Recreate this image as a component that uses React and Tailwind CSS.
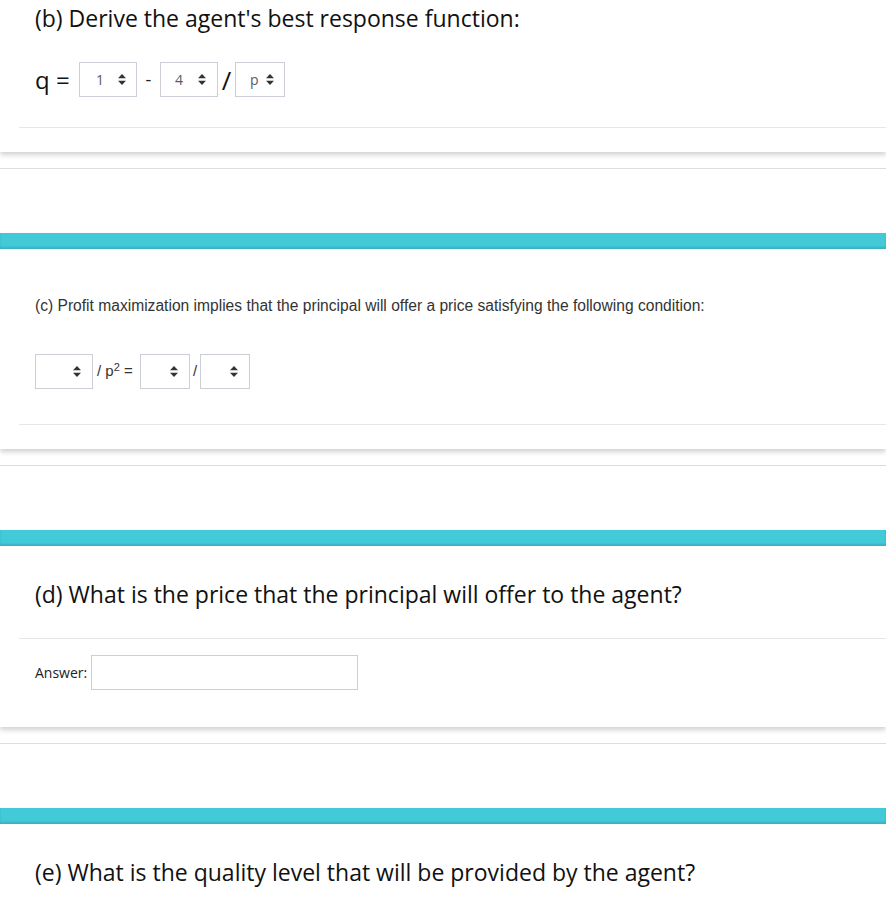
import React from "react";

const seg = { fontFamily: '"Open Sans", "Noto Sans", sans-serif' };
const arial = { fontFamily: '"Liberation Sans", Arial, sans-serif' };

function Arrows() {
  return (
    <svg width="8" height="11" viewBox="0 0 8 11" className="shrink-0">
      <path d="M4 0 L8 4.2 L0 4.2 Z" fill="#333" />
      <path d="M0 6.8 L8 6.8 L4 11 Z" fill="#333" />
    </svg>
  );
}

function Sel({ w, value, textX, arrowX }) {
  return (
    <div
      className="relative h-[35px] border border-[#ccd0d6] bg-white shrink-0"
      style={{ width: w }}
    >
      {value && (
        <span
          className="absolute top-0 leading-[33px] text-[14px] text-[#5a5a6a]"
          style={{ left: textX, ...seg }}
        >
          {value}
        </span>
      )}
      <span className="absolute top-[11px]" style={{ left: arrowX }}>
        <Arrows />
      </span>
    </div>
  );
}

function TealBar() {
  return <div className="h-4 bg-[#42cad9] shadow-[inset_0_-2px_2px_rgba(0,0,0,0.12)]" />;
}

function Sep() {
  return <div className="ml-[19px] h-px bg-[#e6e6e6]" />;
}

function Gap() {
  return (
    <>
      <div className="mt-4 h-px bg-[#dddddd]" />
      <div className="h-16" />
    </>
  );
}

export default function App() {
  return (
    <div className="w-[886px] bg-white text-[#111] overflow-hidden" style={seg}>
      {/* Card b */}
      <div className="bg-white shadow-[0_3px_5px_rgba(0,0,0,0.18)]">
        <div className="pl-[35px] text-[23px] leading-[36px] text-[#111]" style={seg}>
          (b) Derive the agent's best response function:
        </div>
        <div className="mt-[26px] flex items-center pl-[35px] h-[35px]">
          <span className="text-[24px] leading-none text-[#111] w-[44px]">q =</span>
          <Sel w={58} value="1" textX={16} arrowX={38} />
          <span className="w-[23px] text-center text-[18px] text-[#222]">-</span>
          <Sel w={58} value="4" textX={14} arrowX={37} />
          <span className="w-[17px] text-center text-[26px] leading-none text-[#111]">/</span>
          <Sel w={50} value="p" textX={14} arrowX={30} />
        </div>
        <div className="mt-[30px]">
          <Sep />
        </div>
        <div className="h-[24px]" />
      </div>
      <div className="mt-[16px] h-px bg-[#dddddd]" />
      <div className="h-16" />

      {/* Card c */}
      <div className="bg-white shadow-[0_3px_5px_rgba(0,0,0,0.18)]">
        <TealBar />
        <div
          className="pt-[46px] pl-[35px] text-[15.6px] leading-[22px] text-[#333]"
          style={arial}
        >
          (c) Profit maximization implies that the principal will offer a price satisfying the following condition:
        </div>
        <div className="mt-[37px] flex items-center pl-[35px] h-[35px] text-[15px] text-[#333]" style={arial}>
          <Sel w={58} arrowX={37} />
          <span className="w-[47px] pl-[4px] whitespace-nowrap">
            / p<sup className="text-[11px]">2</sup> =
          </span>
          <Sel w={50} arrowX={29} />
          <span className="w-[10px] text-center">/</span>
          <Sel w={50} arrowX={29} />
        </div>
        <div className="mt-[35px]">
          <Sep />
        </div>
        <div className="h-6" />
      </div>
      <Gap />

      {/* Card d */}
      <div className="bg-white shadow-[0_3px_5px_rgba(0,0,0,0.18)]">
        <TealBar />
        <div className="pt-[30px] pl-[35px] text-[23px] leading-[36px] text-[#111]">
          (d) What is the price that the principal will offer to the agent?
        </div>
        <div className="mt-[26px]">
          <Sep />
        </div>
        <div className="mt-4 flex items-center pl-[35px] h-[35px]">
          <span className="text-[14px] text-[#222] w-[56px]">Answer:</span>
          <div className="h-[35px] w-[267px] border border-[#ccd0d6] bg-white" />
        </div>
        <div className="h-[37px]" />
      </div>
      <Gap />

      {/* Card e */}
      <div className="bg-white">
        <TealBar />
        <div className="pt-[30px] pl-[35px] text-[23px] leading-[36px] text-[#111]">
          (e) What is the quality level that will be provided by the agent?
        </div>
        <div className="h-10" />
      </div>
    </div>
  );
}
